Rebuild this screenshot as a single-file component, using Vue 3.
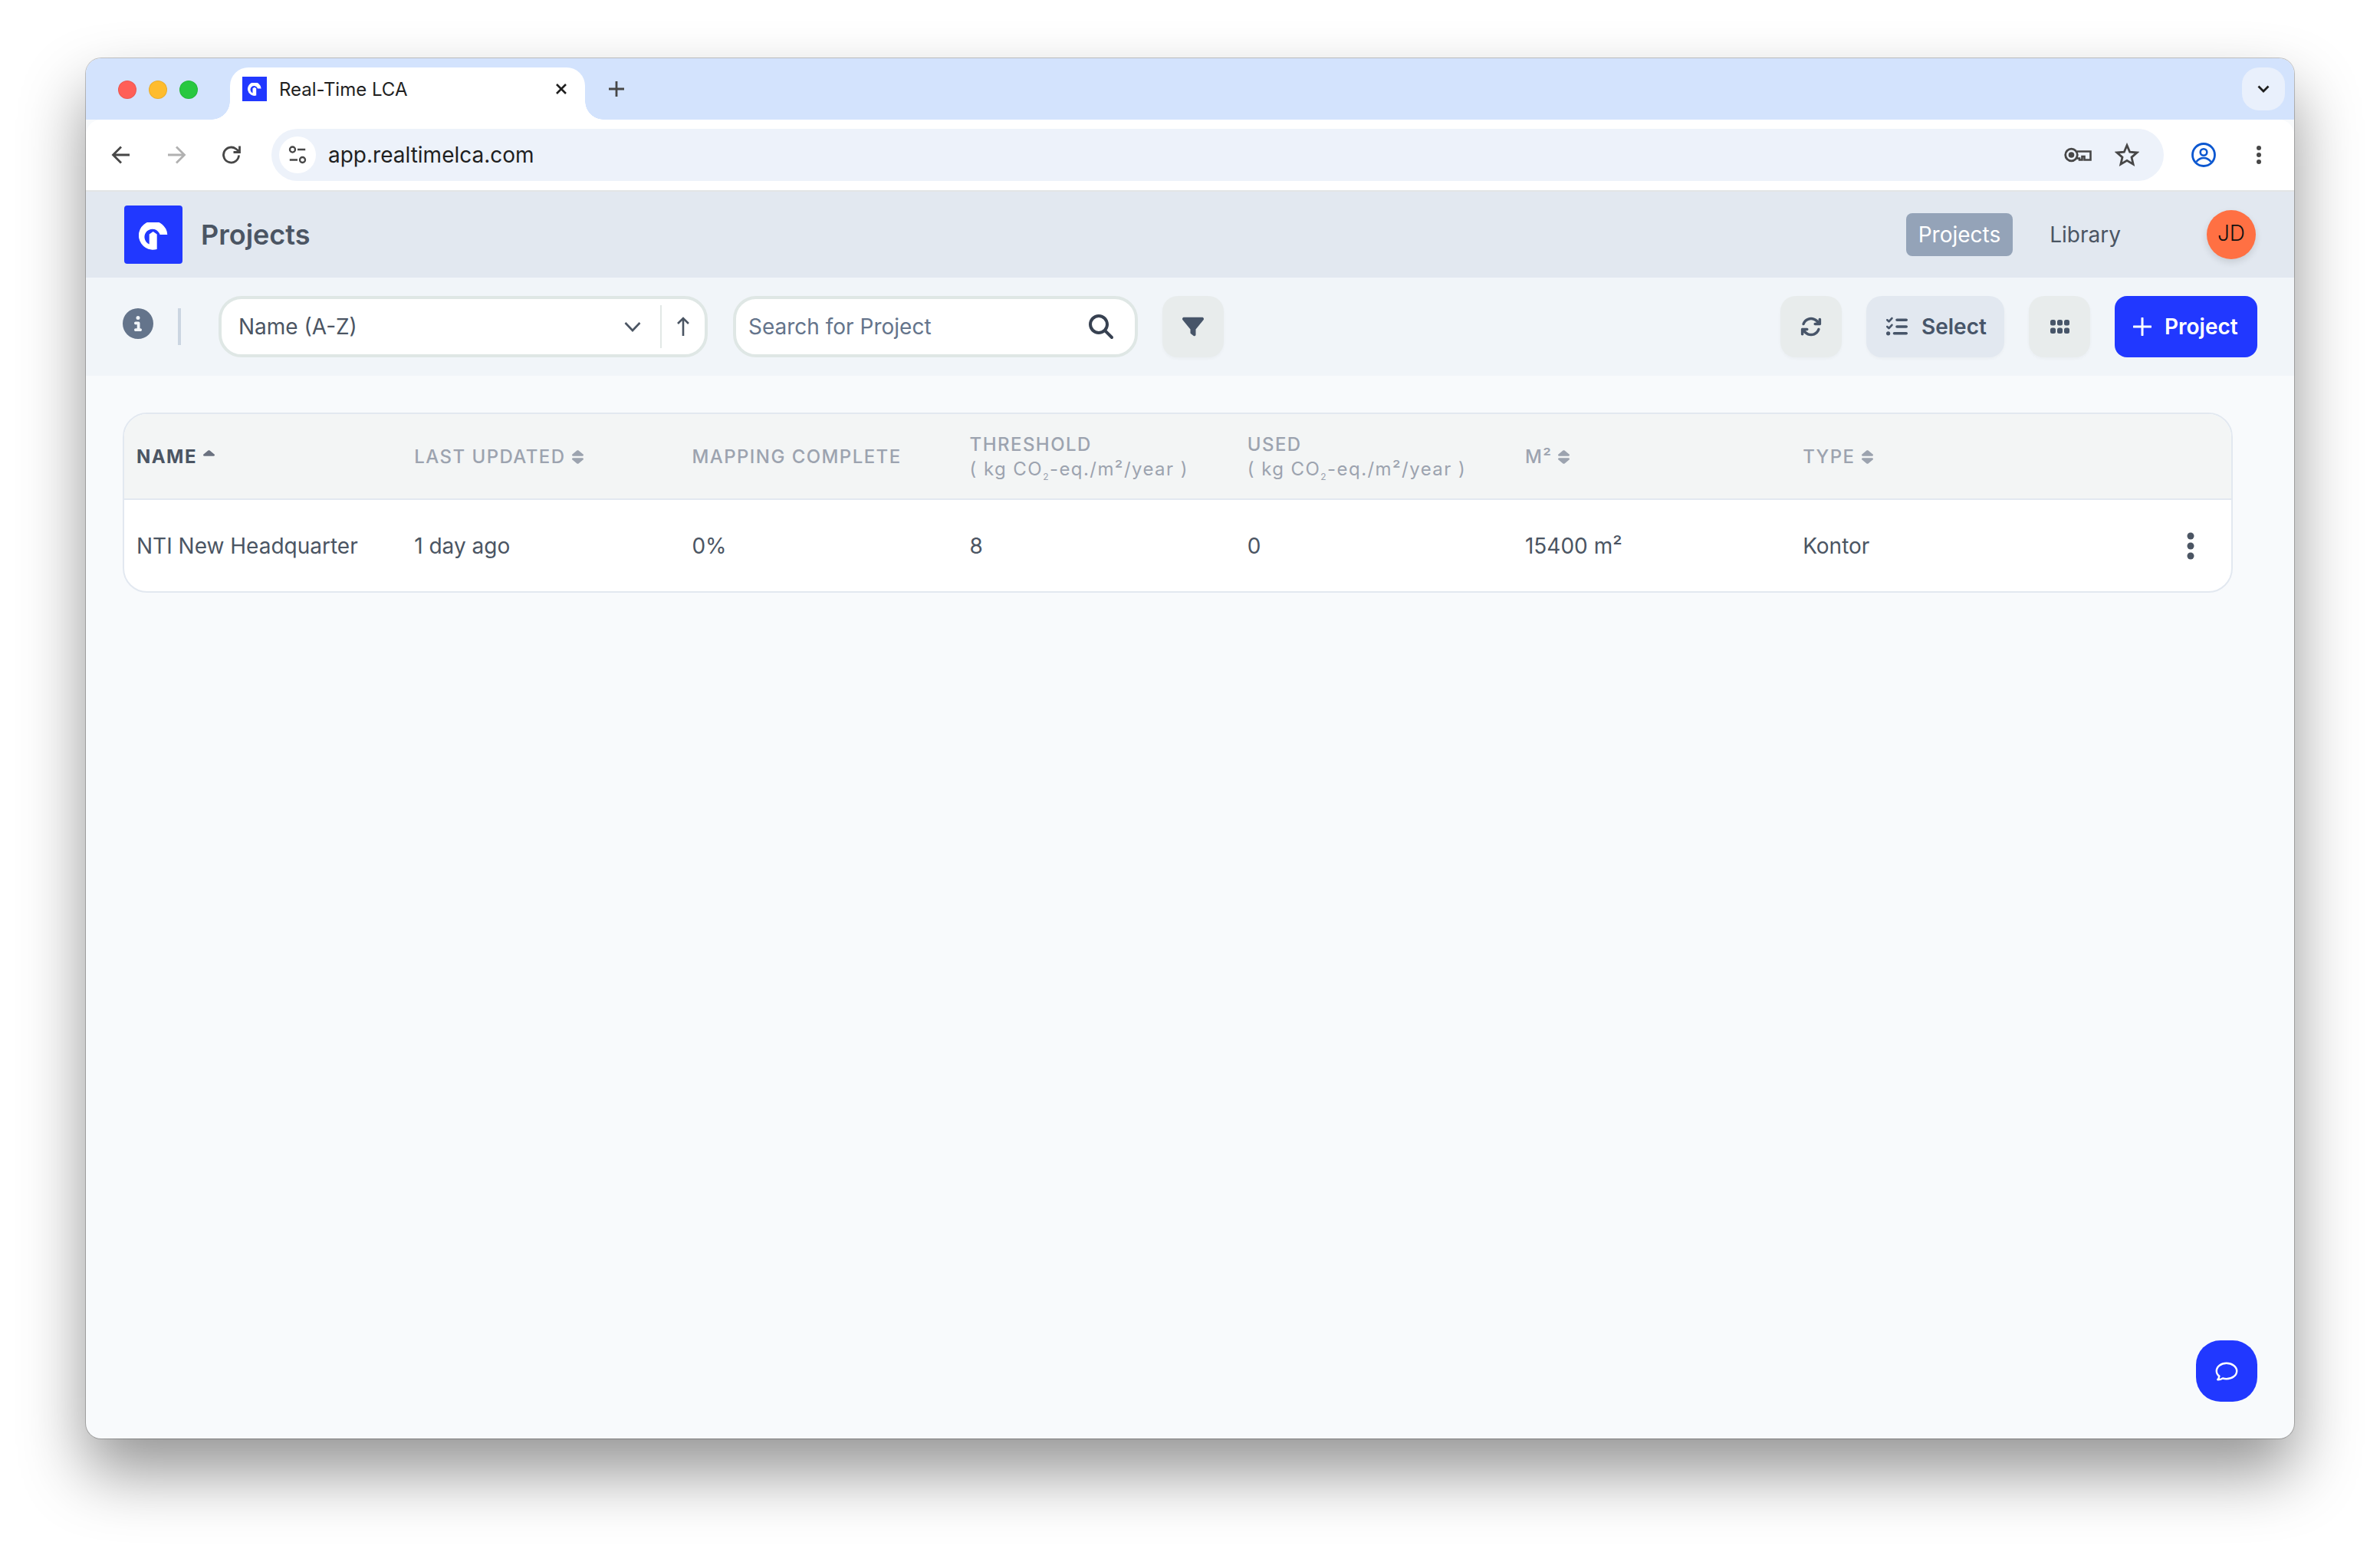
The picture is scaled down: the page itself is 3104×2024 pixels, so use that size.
<template>
  <div class="page">
    <div class="window">
      <div class="tabstrip">
        <div class="lights">
          <span class="light red"></span><span class="light amber"></span><span class="light green"></span>
        </div>
        <div class="tab">
          <span class="favicon">
            <svg viewBox="0 0 38 36" width="18" height="17"><path :d="logoPath" fill="#fff" /></svg>
          </span>
          <span class="tab-title">Real-Time LCA</span>
          <svg class="tab-close" viewBox="0 0 20 20" width="20" height="20"><path d="M4 4l12 12M16 4L4 16" stroke="#1f1f1f" stroke-width="2.6" fill="none" /></svg>
        </div>
        <svg class="new-tab" viewBox="0 0 24 24" width="24" height="24"><path d="M12 2v20M2 12h20" stroke="#474747" stroke-width="2.8" fill="none" /></svg>
        <div class="tab-menu">
          <svg viewBox="0 0 20 20" width="20" height="20"><path d="M3.5 6.5L10 13l6.5-6.5" stroke="#1f1f1f" stroke-width="2.8" fill="none" /></svg>
        </div>
      </div>

      <div class="browserbar">
        <div class="nav-icons">
          <svg viewBox="0 0 28 28" width="28" height="28"><path d="M25 14H4M14 3.5L3.5 14 14 24.5" stroke="#474747" stroke-width="2.8" fill="none" /></svg>
          <svg viewBox="0 0 28 28" width="28" height="28"><path d="M3 14h21M14 3.5L24.5 14 14 24.5" stroke="#b1b1b1" stroke-width="2.8" fill="none" /></svg>
          <svg viewBox="0 0 28 28" width="28" height="28"><path d="M23.5 14.5A10 10 0 1 1 19.5 6L24 9.500M24.5 2.500v8h-8" stroke="#474747" stroke-width="2.8" fill="none" /></svg>
        </div>
        <div class="omnibox">
          <span class="site-chip">
            <svg viewBox="0 0 28 28" width="26" height="26">
              <circle cx="7" cy="6.5" r="3.8" stroke="#474747" stroke-width="2.5" fill="none" />
              <path d="M14 6.5h11M3 21h11" stroke="#474747" stroke-width="2.8" fill="none" />
              <circle cx="21" cy="21" r="3.8" stroke="#474747" stroke-width="2.5" fill="none" />
            </svg>
          </span>
          <span class="url">app.realtimelca.com</span>
          <span class="omni-right">
            <svg viewBox="0 0 36 22" width="36" height="22">
              <circle cx="9.5" cy="11" r="7.8" stroke="#474747" stroke-width="2.8" fill="none" />
              <circle cx="9.5" cy="11" r="3.8" fill="#474747" />
              <path d="M17 6.500h17.500v11h-8V13h-3v4.500h-3.500V15.500H17" stroke="#474747" stroke-width="2.6" fill="none" />
            </svg>
            <svg viewBox="0 0 32 32" width="32" height="32"><path d="M16 3.500l3.700 8.700 9.300.8-7 6.100 2.100 9.100L16 23.300l-8.100 4.900L10 19.100 3 13l9.300-.8z" stroke="#474747" stroke-width="2.8" stroke-linejoin="miter" fill="none" /></svg>
          </span>
        </div>
        <svg class="profile" viewBox="0 0 32 32" width="32" height="32">
          <circle cx="16" cy="16" r="14.5" stroke="#0b57d0" stroke-width="2.8" fill="none" />
          <circle cx="16" cy="12.5" r="4.3" stroke="#0b57d0" stroke-width="2.6" fill="none" />
          <path d="M6.500 25c3-3.800 6-5 9.500-5s6.500 1.200 9.500 5" stroke="#0b57d0" stroke-width="2.6" fill="none" />
        </svg>
        <svg class="more" viewBox="0 0 8 28" width="8" height="28"><circle cx="4" cy="5" r="3" fill="#474747" /><circle cx="4" cy="14" r="3" fill="#474747" /><circle cx="4" cy="23" r="3" fill="#474747" /></svg>
      </div>

      <header class="appbar">
        <div class="logo">
          <svg viewBox="0 0 38 36" width="38" height="36"><path :d="logoPath" fill="#fff" /></svg>
        </div>
        <h1 class="title">Projects</h1>
        <nav class="appnav">
          <a class="navlink active">Projects</a>
          <a class="navlink">Library</a>
        </nav>
        <div class="avatar">JD</div>
      </header>

      <div class="filters">
        <svg class="info" viewBox="0 0 512 512" width="40" height="40"><path fill="#64748b" d="M256 512A256 256 0 1 0 256 0a256 256 0 1 0 0 512zM216 336h24V272H216c-13.300 0-24-10.700-24-24s10.700-24 24-24h48c13.300 0 24 10.700 24 24v88h8c13.300 0 24 10.700 24 24s-10.700 24-24 24H216c-13.300 0-24-10.700-24-24s10.700-24 24-24zm40-208a32 32 0 1 1 0 64 32 32 0 1 1 0-64z" /></svg>
        <span class="vsep"></span>
        <div class="sortbox">
          <span class="sort-label">Name (A-Z)</span>
          <svg class="sort-chev" viewBox="0 0 24 24" width="24" height="24"><path d="M2.500 7L12 17l9.500-10" stroke="#4b5563" stroke-width="2.6" fill="none" /></svg>
          <span class="sort-sep"></span>
          <svg class="sort-arrow" viewBox="0 0 24 26" width="24" height="26"><path d="M12 25V2M5 9l7-7 7 7" stroke="#4b5563" stroke-width="2.6" fill="none" /></svg>
        </div>
        <div class="searchbox">
          <span class="search-ph">Search for Project</span>
          <svg viewBox="0 0 512 512" width="32" height="32"><path fill="#374151" d="M416 208c0 45.900-14.900 88.300-40 122.700L502.600 457.400c12.500 12.500 12.500 32.800 0 45.300s-32.800 12.500-45.300 0L330.700 376c-34.400 25.200-76.800 40-122.700 40C93.100 416 0 322.900 0 208S93.100 0 208 0S416 93.100 416 208zM208 352a144 144 0 1 0 0-288 144 144 0 1 0 0 288z" /></svg>
        </div>
        <button class="iconbtn">
          <svg viewBox="0 0 512 512" width="28" height="28"><path fill="#475569" d="M3.900 54.900C10.500 40.900 24.500 32 40 32H472c15.500 0 29.500 8.900 36.100 22.900s4.600 30.500-5.200 42.500L320 320.900V448c0 12.100-6.800 23.200-17.700 28.600s-23.800 4.300-33.500-3l-64-48c-8.100-6-12.800-15.500-12.800-25.600V320.900L9 97.300C-.7 85.400-2.800 68.800 3.900 54.900z" /></svg>
        </button>
        <span class="spacer"></span>
        <button class="iconbtn">
          <svg viewBox="0 0 512 512" width="28" height="28"><path fill="#475569" d="M105.100 202.600c7.700-21.800 20.200-42.300 37.800-59.800c62.500-62.500 163.800-62.500 226.300 0L386.300 160H352c-17.700 0-32 14.300-32 32s14.300 32 32 32H463.500c0 0 0 0 0 0h.4c17.700 0 32-14.300 32-32V80c0-17.700-14.300-32-32-32s-32 14.300-32 32v35.200L414.400 97.600c-87.500-87.500-229.300-87.500-316.800 0C73.200 122 55.600 150.700 44.800 181.400c-5.900 16.700 2.900 34.900 19.500 40.800s34.900-2.900 40.800-19.500zM39 289.300c-5 1.500-9.800 4.200-13.700 8.200c-4 4-6.700 8.800-8.100 14c-.3 1.200-.6 2.500-.8 3.800c-.3 1.700-.4 3.400-.4 5.100V432c0 17.700 14.300 32 32 32s32-14.300 32-32V396.900l17.600 17.500 0 0c87.500 87.400 229.300 87.400 316.700 0c24.400-24.400 42.100-53.100 52.900-83.700c5.900-16.700-2.900-34.900-19.500-40.800s-34.900 2.900-40.800 19.500c-7.700 21.800-20.200 42.300-37.800 59.800c-62.500 62.500-163.800 62.500-226.300 0l-.1-.1L125.600 352H160c17.700 0 32-14.300 32-32s-14.300-32-32-32H48.400c-1.600 0-3.200 .1-4.800 .3s-3.100 .5-4.600 1z" /></svg>
        </button>
        <button class="selectbtn">
          <svg viewBox="0 0 512 512" width="28" height="28"><path fill="#475569" d="M152.100 38.200c9.900 8.900 10.700 24 1.800 33.900l-72 80c-4.400 4.900-10.600 7.800-17.200 7.900s-12.900-2.400-17.600-7L7 113C-2.300 103.600-2.300 88.400 7 79s24.600-9.400 33.900 0l22.100 22.100 55.100-61.200c8.900-9.900 24-10.700 33.900-1.800zm0 160c9.900 8.900 10.700 24 1.800 33.900l-72 80c-4.400 4.900-10.600 7.800-17.200 7.900s-12.900-2.400-17.600-7L7 273c-9.400-9.400-9.400-24.600 0-33.900s24.600-9.400 33.900 0l22.100 22.100 55.100-61.200c8.900-9.900 24-10.700 33.900-1.800zM224 96c0-17.700 14.300-32 32-32H480c17.700 0 32 14.300 32 32s-14.300 32-32 32H256c-17.700 0-32-14.300-32-32zm0 160c0-17.700 14.300-32 32-32H480c17.700 0 32 14.300 32 32s-14.300 32-32 32H256c-17.700 0-32-14.300-32-32zM160 416c0-17.700 14.300-32 32-32H480c17.700 0 32 14.300 32 32s-14.300 32-32 32H192c-17.700 0-32-14.300-32-32zM48 368a48 48 0 1 1 0 96 48 48 0 1 1 0-96z" /></svg>
          <span>Select</span>
        </button>
        <button class="iconbtn">
          <svg viewBox="0 0 25 18" width="25" height="18" fill="#475569">
            <rect x="0" y="0" width="7" height="7.5" rx="2.5" /><rect x="9" y="0" width="7" height="7.5" rx="2.5" /><rect x="18" y="0" width="7" height="7.5" rx="2.5" />
            <rect x="0" y="10.5" width="7" height="7.5" rx="2.5" /><rect x="9" y="10.5" width="7" height="7.5" rx="2.5" /><rect x="18" y="10.5" width="7" height="7.5" rx="2.5" />
          </svg>
        </button>
        <button class="projectbtn">
          <svg viewBox="0 0 24 24" width="24" height="24"><path d="M12 1v22M1 12h22" stroke="#fff" stroke-width="3" stroke-linecap="round" fill="none" /></svg>
          <span>Project</span>
        </button>
      </div>

      <main class="content">
        <div class="table">
          <div class="thead">
            <div v-for="col in columns" :key="col.label" class="th" :class="{ sorted: col.sorted }">
              <div class="th-line">
                <span>{{ col.label }}</span>
                <svg v-if="col.sortable" class="sorticon" viewBox="0 0 320 512" width="15" height="20" preserveAspectRatio="none">
                  <path fill="currentColor" d="M137.400 41.400c12.500-12.500 32.800-12.500 45.300 0l128 128c9.200 9.200 11.900 22.900 6.900 34.900s-16.600 19.800-29.600 19.800H32c-12.900 0-24.600-7.800-29.600-19.800s-2.200-25.700 6.900-34.900l128-128z" />
                  <path v-if="!col.sorted" fill="currentColor" d="M137.400 470.700l-128-128c-9.200-9.200-11.900-22.900-6.900-34.900s16.600-19.800 29.600-19.800H288c12.900 0 24.600 7.800 29.600 19.800s2.200 25.700-6.900 34.900l-128 128c-12.500 12.500-32.800 12.500-45.300 0z" />
                </svg>
              </div>
              <div v-if="col.unit" class="th-unit">( kg CO<sub>2</sub>-eq./m²/year )</div>
            </div>
          </div>
          <div v-for="row in rows" :key="row[0]" class="tr">
            <div v-for="cell in row" :key="cell" class="td">{{ cell }}</div>
            <div class="td-more">
              <svg viewBox="0 0 10 36" width="10" height="36" fill="#4b5563"><circle cx="5" cy="5" r="4.5" /><circle cx="5" cy="18" r="4.5" /><circle cx="5" cy="31" r="4.5" /></svg>
            </div>
          </div>
        </div>
      </main>

      <button class="chat">
        <svg viewBox="0 0 30 26" width="30" height="26"><path d="M5.500 19.800C3 18 1.800 15.600 1.800 13c0-5.800 5.800-10.200 13-10.200s13.400 4.400 13.400 10.200-6.200 10.200-13.400 10.200c-1.700 0-3.400-.2-4.900-.7-1.700 1-4 1.900-6.600 1.700 1.200-1.200 2-2.700 1.700-4.400z" stroke="#fff" stroke-width="2.4" stroke-linejoin="round" fill="none" /></svg>
      </button>
    </div>
  </div>
</template>

<script setup>
const logoPath =
  'M37.300 16A18.700 18.700 0 1 0 23.700 35V15.500L18.700 12l-5 3.500v13A10.300 10.300 0 1 1 27.600 16Z'

const columns = [
  { label: 'NAME', sortable: true, sorted: true },
  { label: 'LAST UPDATED', sortable: true },
  { label: 'MAPPING COMPLETE' },
  { label: 'THRESHOLD', unit: true },
  { label: 'USED', unit: true },
  { label: 'M²', sortable: true },
  { label: 'TYPE', sortable: true },
]

const rows = [['NTI New Headquarter', '1 day ago', '0%', '8', '0', '15400 m²', 'Kontor']]
</script>

<style>
html,
body {
  margin: 0;
  background: #fff;
}
</style>

<style scoped>
.page {
  box-sizing: border-box;
  width: 3104px;
  height: 2024px;
  padding: 76px 112px 148px;
  background: #fff;
  overflow: hidden;
  font-family: Inter, 'Noto Sans', sans-serif;
  color: #4b5563;
}
.window {
  position: relative;
  display: flex;
  flex-direction: column;
  height: 1800px;
  border-radius: 20px;
  background: #f8fafc;
  box-shadow: 0 0 0 1px rgba(0, 0, 0, 0.22), 0 44px 84px rgba(0, 0, 0, 0.42);
}

/* tab strip */
.tabstrip {
  display: flex;
  align-items: flex-start;
  height: 80px;
  flex: none;
  background: #d3e3fd;
  border-radius: 20px 20px 0 0;
}
.lights {
  display: flex;
  gap: 16px;
  margin: 29px 42px 0;
}
.light {
  width: 24px;
  height: 24px;
  border-radius: 50%;
  box-sizing: border-box;
  border: 1px solid rgba(0, 0, 0, 0.08);
}
.red { background: #ff5f57; }
.amber { background: #febc2e; }
.green { background: #28c840; }
.tab {
  position: relative;
  display: flex;
  align-items: center;
  box-sizing: border-box;
  width: 463px;
  height: 68px;
  margin-top: 12px;
  padding: 0 21px 12px 16px;
  background: #fff;
  border-radius: 24px 24px 0 0;
}
.tab::before,
.tab::after {
  content: '';
  position: absolute;
  bottom: 0;
  width: 24px;
  height: 24px;
}
.tab::before {
  left: -24px;
  background: radial-gradient(circle at 0 0, transparent 23.5px, #fff 24px);
}
.tab::after {
  right: -24px;
  background: radial-gradient(circle at 100% 0, transparent 23.5px, #fff 24px);
}
.favicon {
  display: flex;
  align-items: center;
  justify-content: center;
  width: 32px;
  height: 32px;
  background: #2138ff;
}
.tab-title {
  flex: 1;
  margin-left: 16px;
  font-size: 24px;
  color: #1f1f1f;
  white-space: nowrap;
}
.new-tab {
  margin: 28px 0 0 29px;
}
.tab-menu {
  display: flex;
  align-items: center;
  justify-content: center;
  width: 56px;
  height: 56px;
  margin: 12px 12px 0 auto;
  background: #e9f0fc;
  border-radius: 22px;
}

/* browser toolbar */
.browserbar {
  display: flex;
  align-items: center;
  flex: none;
  height: 92px;
  background: #fff;
  border-bottom: 2px solid #e3e5e5;
  border-radius: 20px 20px 0 0;
}
.nav-icons {
  display: flex;
  gap: 44px;
  margin-left: 32px;
}
.omnibox {
  display: flex;
  align-items: center;
  flex: none;
  box-sizing: border-box;
  width: 2468px;
  height: 68px;
  margin-left: 38px;
  padding: 0 32px 0 10px;
  background: #edf2fa;
  border-radius: 34px;
}
.site-chip {
  display: flex;
  align-items: center;
  justify-content: center;
  width: 48px;
  height: 48px;
  background: #fff;
  border-radius: 50%;
}
.url {
  margin-left: 16px;
  font-size: 28px;
  color: #1f1f1f;
  white-space: nowrap;
}
.omni-right {
  display: flex;
  align-items: center;
  gap: 30px;
  margin-left: auto;
}
.profile {
  margin-left: 36px;
}
.more {
  margin-left: 52px;
}

/* app header */
.appbar {
  display: flex;
  align-items: center;
  flex: none;
  height: 112px;
  padding: 0 50px;
  background: #e2e8f0;
}
.logo {
  display: flex;
  align-items: center;
  justify-content: center;
  width: 76px;
  height: 76px;
  padding-top: 4px;
  box-sizing: border-box;
  background: #2138ff;
  border-radius: 4px;
}
.title {
  margin: 0 0 0 24px;
  font-size: 36px;
  font-weight: 600;
  color: #4b5563;
}
.appnav {
  display: flex;
  gap: 32px;
  margin-left: auto;
}
.navlink {
  display: flex;
  align-items: center;
  height: 56px;
  padding: 0 16px;
  font-size: 28px;
  border-radius: 8px;
}
.navlink.active {
  background: #94a3b8;
  color: #fff;
}
.avatar {
  display: flex;
  align-items: center;
  justify-content: center;
  box-sizing: border-box;
  width: 64px;
  height: 64px;
  padding-bottom: 4px;
  margin-left: 96px;
  background: #ff7043;
  border-radius: 50%;
  font-size: 28px;
  font-weight: 300;
  color: #111;
  box-shadow: 0 4px 10px rgba(0, 0, 0, 0.12);
}

/* filters row */
.filters {
  display: flex;
  align-items: center;
  flex: none;
  box-sizing: border-box;
  height: 128px;
  padding: 0 48px;
  background: #f1f5f9;
}
.info {
  margin-bottom: 8px;
}
.vsep {
  width: 4px;
  height: 48px;
  margin: 0 49px 0 32px;
  background: #cbd5e1;
}
.sortbox,
.searchbox {
  display: flex;
  align-items: center;
  box-sizing: border-box;
  height: 80px;
  background: #fff;
  border: 4px solid #dfe7e5;
  border-radius: 30px;
}
.sortbox {
  width: 638px;
  padding: 0 16px 0 22px;
}
.sort-label {
  flex: 1;
  font-size: 28px;
  color: #4b5563;
}
.sort-sep {
  width: 2px;
  height: 56px;
  margin: 0 16px 0 24px;
  background: #e2e8e6;
}
.searchbox {
  width: 528px;
  margin-left: 33px;
  padding: 0 28px 0 16px;
  justify-content: space-between;
}
.search-ph {
  font-size: 28px;
  color: #64748b;
}
button {
  border: 0;
  padding: 0;
  font-family: inherit;
}
.iconbtn {
  display: flex;
  align-items: center;
  justify-content: center;
  width: 80px;
  height: 80px;
  background: #e8ecec;
  border-radius: 20px;
  box-shadow: 0 2px 4px rgba(0, 0, 0, 0.03);
}
.searchbox + .iconbtn {
  margin-left: 32px;
}
.spacer {
  flex: 1;
}
.selectbtn {
  display: flex;
  align-items: center;
  gap: 18px;
  box-sizing: border-box;
  width: 180px;
  height: 80px;
  margin: 0 32px;
  padding-left: 26px;
  background: #e2e8f0;
  border-radius: 20px;
  font-size: 28px;
  font-weight: 600;
  color: #475569;
  box-shadow: 0 2px 4px rgba(0, 0, 0, 0.03);
}
.projectbtn {
  display: flex;
  align-items: center;
  gap: 17px;
  box-sizing: border-box;
  width: 186px;
  height: 80px;
  margin-left: 32px;
  padding-left: 24px;
  background: #2138ff;
  border-radius: 16px;
  font-size: 28px;
  font-weight: 600;
  color: #fff;
}

/* table */
.content {
  flex: 1;
  padding: 48px 80px 0 48px;
}
.table {
  box-sizing: border-box;
  width: 2752px;
  background: #fff;
  border: 2px solid #e2e8f0;
  border-radius: 32px;
  overflow: hidden;
}
.thead,
.tr {
  display: grid;
  grid-template-columns: repeat(7, 362.2px) 1fr;
  padding-left: 16px;
}
.thead {
  box-sizing: border-box;
  align-items: center;
  height: 112px;
  padding-top: 2px;
  background: #f3f5f5;
  border-bottom: 2px solid #e2e8f0;
}
.th {
  font-size: 24px;
  font-weight: 500;
  letter-spacing: 0.06em;
  line-height: 32px;
  color: #9ca3af;
  white-space: nowrap;
}
.th.sorted {
  font-weight: 700;
  color: #4b5563;
}
.th-line {
  display: flex;
  align-items: center;
  gap: 8px;
}
.sorticon {
  flex: none;
}
.sorted .sorticon {
  color: #6b7280;
}
.th-unit {
  font-weight: 400;
}
.th-unit sub {
  font-size: 12px;
  line-height: 0;
}
.tr {
  align-items: center;
  height: 119px;
}
.td {
  font-size: 28px;
  color: #4b5563;
  white-space: nowrap;
}
.td-more {
  display: flex;
  justify-content: flex-end;
  padding-right: 48px;
}

/* chat */
.chat {
  position: absolute;
  right: 48px;
  bottom: 48px;
  display: flex;
  align-items: center;
  justify-content: center;
  width: 80px;
  height: 80px;
  background: #2138ff;
  border-radius: 32px;
}
</style>
